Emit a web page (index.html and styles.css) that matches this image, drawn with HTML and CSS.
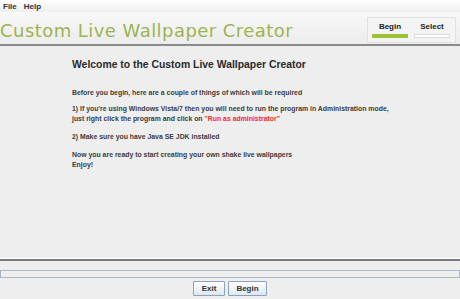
FILE: index.html
```html
<!DOCTYPE html>
<html>
<head>
<meta charset="utf-8">
<link rel="stylesheet" href="styles.css">
</head>
<body>
<div class="app">
  <div class="menubar">
    <span class="menu">File</span>
    <span class="menu">Help</span>
  </div>
  <div class="header">
    <div class="title">Custom Live Wallpaper Creator</div>
    <div class="steps">
      <div class="step">
        <span class="step-label">Begin</span>
        <span class="step-bar active"></span>
      </div>
      <div class="step">
        <span class="step-label">Select</span>
        <span class="step-bar"></span>
      </div>
    </div>
  </div>
  <div class="content">
    <h1 class="heading">Welcome to the Custom Live Wallpaper Creator</h1>
    <p class="para first">Before you begin, here are a couple of things of which will be required</p>
    <p class="para">1) If you're using Windows Vista/7 then you will need to run the program in Administration mode,<br>just right click the program and click on <span class="red">"Run as administrator"</span></p>
    <p class="para">2) Make sure you have Java SE JDK installed</p>
    <p class="para">Now you are ready to start creating your own shake live wallpapers<br>Enjoy!</p>
  </div>
  <div class="separator"></div>
  <div class="footer">
    <div class="progress"></div>
    <div class="buttons">
      <button class="btn">Exit</button>
      <button class="btn">Begin</button>
    </div>
  </div>
</div>
</body>
</html>
```
FILE: styles.css
```css
* { box-sizing: border-box; }
html, body { margin: 0; padding: 0; }
body {
  width: 460px;
  height: 299px;
  background: #eeeeee;
  font-family: "Liberation Sans", Arial, sans-serif;
  overflow: hidden;
}
.app {
  display: flex;
  flex-direction: column;
  height: 299px;
}
.menubar {
  height: 12px;
  display: flex;
  gap: 7px;
  padding-left: 3px;
  align-items: center;
  background: linear-gradient(#ffffff, #eeeeee);
  font-size: 8px;
  font-weight: bold;
  color: #333;
}
.header {
  height: 34px;
  display: flex;
  justify-content: space-between;
  align-items: center;
  background: linear-gradient(#f8f8f8, #ececec);
  border-bottom: 2px solid #8a8a8a;
}
.title {
  font-family: "DejaVu Sans", sans-serif;
  font-size: 18px;
  color: #9db452;
  letter-spacing: 0.45px;
  margin-top: 5px;
}
.steps {
  display: flex;
  gap: 6px;
  margin-right: 4px;
  margin-top: 3px;
  padding: 4px 5px 4px 4px;
  background: #f4f4f4;
  border: 1px solid #e2e2e2;
}
.step {
  display: flex;
  flex-direction: column;
  align-items: center;
  gap: 3px;
}
.step-label {
  font-size: 8px;
  font-weight: bold;
  color: #222;
  line-height: 9px;
}
.step-bar {
  width: 36px;
  height: 4px;
  background: #ffffff;
  border: 1px solid #dddddd;
}
.step-bar.active {
  background: #9cc236;
  border-color: #9cc236;
}
.content {
  flex: 1;
  padding: 12px 0 0 72px;
  color: #3c3c3c;
}
.heading {
  margin: 0 0 17px 0;
  font-size: 10.4px;
  font-weight: bold;
  color: #2a2a2a;
  line-height: 13px;
}
.para {
  margin: 0 0 8px 0;
  font-size: 6.9px;
  font-weight: bold;
  line-height: 10px;
}
.para.first { margin-bottom: 6px; }
.red { color: #f22a2a; }
.separator {
  height: 3px;
  border-top: 1px solid #ffffff;
  border-bottom: 2px solid #7c7c7c;
}
.footer {
  height: 38px;
  display: flex;
  flex-direction: column;
  align-items: center;
  padding-top: 9px;
  gap: 3px;
}
.progress {
  width: 460px;
  height: 8px;
  border: 1px solid #a9b9c8;
  background: #eeeeee;
}
.buttons {
  display: flex;
  gap: 3px;
}
.btn {
  height: 15px;
  padding: 0;
  font-family: "Liberation Sans", Arial, sans-serif;
  font-size: 8px;
  font-weight: bold;
  color: #333;
  border: 1px solid #8da1b8;
  background: linear-gradient(#ffffff, #dde8f3);
  border-radius: 1px;
}
.btn:first-child { width: 32px; }
.btn:last-child { width: 39px; }
```
